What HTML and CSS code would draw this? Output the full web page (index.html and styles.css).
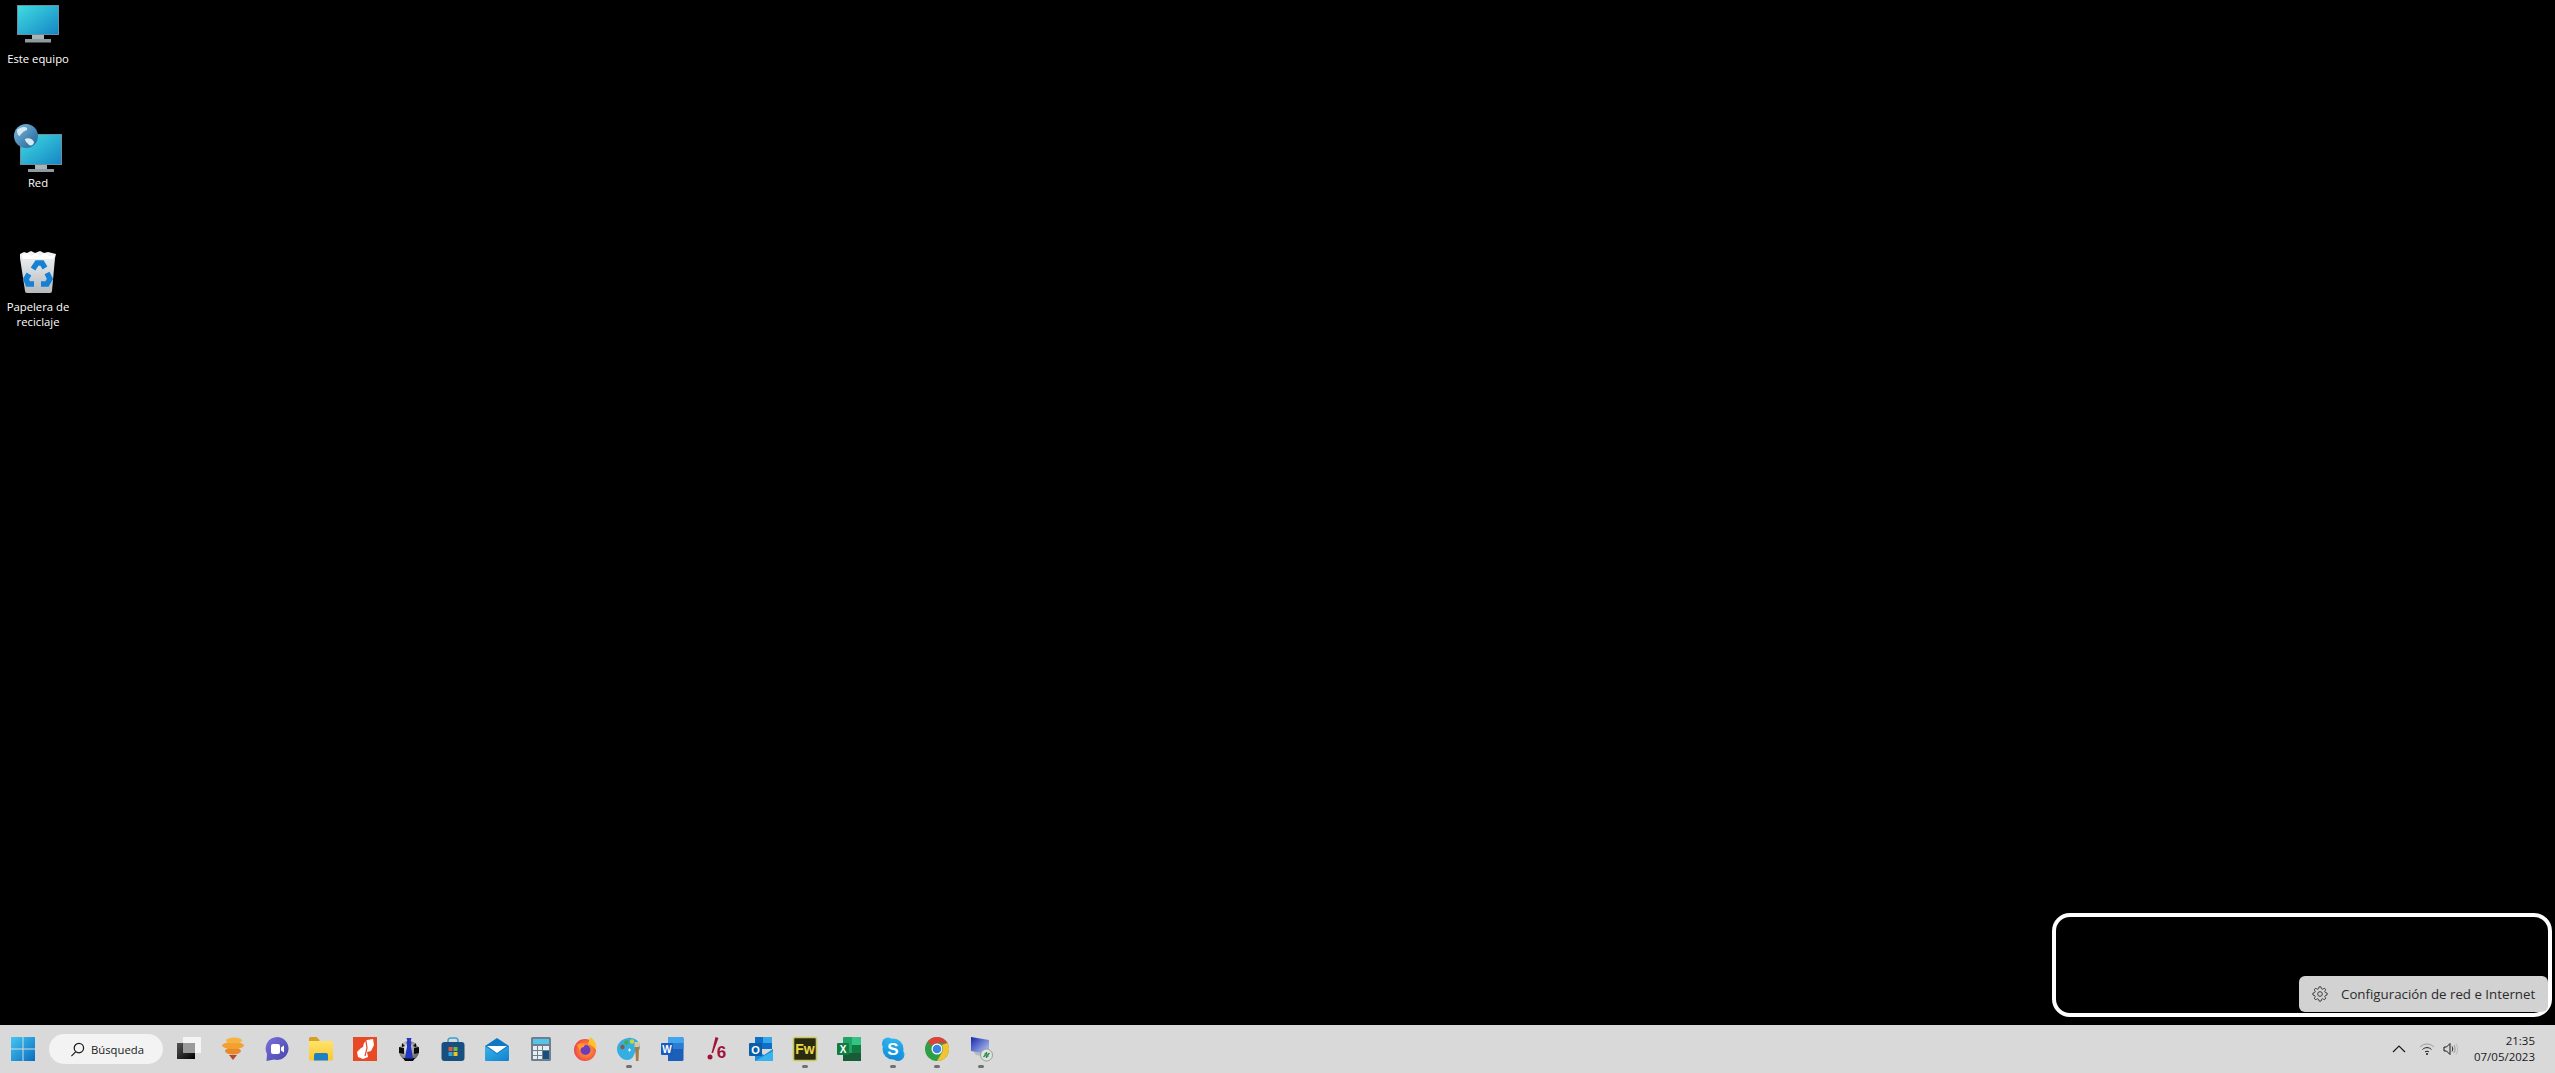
FILE: index.html
```html
<!DOCTYPE html>
<html lang="es">
<head>
    <meta charset="UTF-8">
    <meta name="viewport" content="width=device-width, initial-scale=1.0">
    <title>Escritorio</title>
    <link rel="stylesheet" href="styles.css">
</head>
<body>
    <svg class="defs" aria-hidden="true">
        <defs>
            <linearGradient id="screen" x1="0" y1="0" x2="1" y2="1">
                <stop offset="0" stop-color="#3fdde2"/>
                <stop offset="1" stop-color="#1685c4"/>
            </linearGradient>
            <linearGradient id="globe" x1="0" y1="0" x2="1" y2="1">
                <stop offset="0" stop-color="#7dbde0"/>
                <stop offset="1" stop-color="#1f5f96"/>
            </linearGradient>
            <linearGradient id="bin" x1="0" y1="0" x2="0" y2="1">
                <stop offset="0" stop-color="#f4f6f7"/>
                <stop offset="1" stop-color="#b6babd"/>
            </linearGradient>
            <linearGradient id="start" x1="0" y1="0" x2="1" y2="1">
                <stop offset="0" stop-color="#43c8f2"/>
                <stop offset="1" stop-color="#0a6cc2"/>
            </linearGradient>
            <linearGradient id="tv-dark" x1="0" y1="0" x2="1" y2="1">
                <stop offset="0" stop-color="#555"/>
                <stop offset="1" stop-color="#000"/>
            </linearGradient>
            <linearGradient id="teams" x1="0" y1="0" x2="1" y2="1">
                <stop offset="0" stop-color="#7a70d8"/>
                <stop offset="1" stop-color="#4646ad"/>
            </linearGradient>
            <linearGradient id="folder" x1="0" y1="0" x2="0" y2="1">
                <stop offset="0" stop-color="#ffe36b"/>
                <stop offset="1" stop-color="#fbc82d"/>
            </linearGradient>
            <linearGradient id="mail" x1="0" y1="0" x2="1" y2="1">
                <stop offset="0" stop-color="#39b4ea"/>
                <stop offset="1" stop-color="#1180cf"/>
            </linearGradient>
            <radialGradient id="fox" cx="0.55" cy="0.5" r="0.6">
                <stop offset="0" stop-color="#ffb02e"/>
                <stop offset="0.7" stop-color="#f9603c"/>
                <stop offset="1" stop-color="#e8305a"/>
            </radialGradient>
            <radialGradient id="ball" cx="0.4" cy="0.35" r="0.7">
                <stop offset="0" stop-color="#eee"/>
                <stop offset="1" stop-color="#555"/>
            </radialGradient>
            <linearGradient id="skype" x1="0" y1="0" x2="0" y2="1">
                <stop offset="0" stop-color="#2fb6ee"/>
                <stop offset="1" stop-color="#0f8ad6"/>
            </linearGradient>
            <linearGradient id="remote" x1="0" y1="0" x2="1" y2="1">
                <stop offset="0" stop-color="#1426b0"/>
                <stop offset="1" stop-color="#c4d3f2"/>
            </linearGradient>
        </defs>
    </svg>

    <main class="desktop">
        <div class="desk-icons">
            <div class="desk-icon">
                <svg class="desk-glyph" viewBox="0 0 48 48">
                    <path d="M18 33h12v4H18z" fill="#a9b4b8"/>
                    <path d="M11 37h26v3.500H11z" fill="#8f9a9e"/>
                    <rect x="3.500" y="3.500" width="41" height="29" fill="url(#screen)" stroke="#6f8fa0"/>
                </svg>
                <span class="desk-label">Este equipo</span>
            </div>
            <div class="desk-icon">
                <svg class="desk-glyph" viewBox="0 0 48 48">
                    <path d="M21 39h12v4H21z" fill="#a9b4b8"/>
                    <path d="M14 43h26v3H14z" fill="#8f9a9e"/>
                    <rect x="6.500" y="8.500" width="41" height="30" fill="url(#screen)" stroke="#6f8fa0"/>
                    <circle cx="12" cy="10" r="12" fill="url(#globe)"/>
                    <path d="M3 4c3-3 8-4 10-2 1 2-2 3-4 4-1 2-3 2-3 4-2 0-3-3-3-6zM11 13c3-2 8 0 9 3 0 3-3 4-5 3-1-2-4-3-4-6z" fill="#d8e9f3"/>
                </svg>
                <span class="desk-label">Red</span>
            </div>
            <div class="desk-icon">
                <svg class="desk-glyph" viewBox="0 0 48 48">
                    <path d="M6 4l4-2 3 1 4-2 4 2 5-2 4 2 4-1 4 1 4 1-1 4-3 33a2 2 0 0 1-2 2H13a2 2 0 0 1-2-2L6 8z" fill="url(#bin)"/>
                    <path d="M8 5l5-2 4 3 5-3 4 3 5-3 4 3 6-1-2 4H9z" fill="#fff"/>
                    <g fill="none" stroke="#1680d4" stroke-width="5.500">
                        <path d="M19 19l4-6 5 0 3 5"/>
                        <path d="M33 23l3 6-3 5-6 0"/>
                        <path d="M20 34l-6 0-2-5 3-5"/>
                    </g>
                </svg>
                <span class="desk-label">Papelera de reciclaje</span>
            </div>
        </div>

        <div class="frame">
            <div class="flyout">
                <svg class="gear" viewBox="0 0 24 24" fill="none" stroke="#333" stroke-width="1.400">
                    <circle cx="12" cy="12" r="3.500"/>
                    <path d="M19.400 15a1.650 1.650 0 0 0 .33 1.820l.06.06a2 2 0 0 1 0 2.830 2 2 0 0 1-2.830 0l-.06-.06a1.650 1.650 0 0 0-1.820-.33 1.650 1.650 0 0 0-1 1.510V21a2 2 0 0 1-2 2 2 2 0 0 1-2-2v-.09A1.650 1.650 0 0 0 9 19.400a1.650 1.650 0 0 0-1.820.33l-.06.06a2 2 0 0 1-2.830 0 2 2 0 0 1 0-2.830l.06-.06a1.650 1.650 0 0 0 .33-1.820 1.650 1.650 0 0 0-1.510-1H3a2 2 0 0 1-2-2 2 2 0 0 1 2-2h.09A1.650 1.650 0 0 0 4.600 9a1.650 1.650 0 0 0-.33-1.820l-.06-.06a2 2 0 0 1 0-2.830 2 2 0 0 1 2.830 0l.06.06a1.650 1.650 0 0 0 1.820.33H9a1.650 1.650 0 0 0 1-1.510V3a2 2 0 0 1 2-2 2 2 0 0 1 2 2v.09a1.650 1.650 0 0 0 1 1.510 1.650 1.650 0 0 0 1.820-.33l.06-.06a2 2 0 0 1 2.830 0 2 2 0 0 1 0 2.830l-.06.06a1.650 1.650 0 0 0-.33 1.820V9a1.650 1.650 0 0 0 1.510 1H21a2 2 0 0 1 2 2 2 2 0 0 1-2 2h-.09a1.650 1.650 0 0 0-1.510 1z"/>
                </svg>
                <span class="flyout-text">Configuración de red e Internet</span>
            </div>
        </div>
    </main>

    <footer class="taskbar">
        <div class="tb-item">
            <svg class="tb-glyph" viewBox="0 0 24 24">
                <path d="M0 0h11.500v11.500H0zM12.500 0H24v11.500H12.500zM0 12.500h11.500V24H0zM12.500 12.500H24V24H12.500z" fill="url(#start)"/>
            </svg>
        </div>
        <div class="search">
            <svg class="search-glyph" viewBox="0 0 16 16" fill="none" stroke="#1a1a1a" stroke-width="1.300">
                <circle cx="9.500" cy="6.500" r="5"/>
                <path d="M6 10.500l-4.500 4.500"/>
            </svg>
            <span class="search-text">Búsqueda</span>
        </div>
        <div class="tb-apps">
            <div class="tb-item">
                <svg class="tb-glyph" viewBox="0 0 24 24">
                    <rect x="6" y="0" width="18" height="16" fill="#f4f4f4"/>
                    <rect x="0" y="6" width="18" height="16" fill="url(#tv-dark)"/>
                    <rect x="6" y="6" width="12" height="10" fill="#9b9b9b"/>
                </svg>
            </div>
            <div class="tb-item">
                <svg class="tb-glyph" viewBox="0 0 24 24">
                    <path d="M8 18h8l-4 5z" fill="#b5482a"/>
                    <ellipse cx="12" cy="14" rx="8" ry="3.500" fill="#e8892a"/>
                    <ellipse cx="12" cy="8.500" rx="11" ry="3.500" fill="#f2a02f"/>
                    <ellipse cx="13" cy="3.500" rx="8" ry="3" fill="#f7b23f"/>
                </svg>
            </div>
            <div class="tb-item">
                <svg class="tb-glyph" viewBox="0 0 24 24">
                    <path d="M12 0a11.500 11.500 0 1 1-3 22.600L1.500 24 2 17A11.500 11.500 0 0 1 12 0z" fill="url(#teams)"/>
                    <rect x="6" y="7" width="9" height="10" rx="2" fill="#fff"/>
                    <path d="M16 10.500l3-2v7l-3-2z" fill="#fff"/>
                </svg>
            </div>
            <div class="tb-item">
                <svg class="tb-glyph" viewBox="0 0 24 24">
                    <path d="M0 1.500A1.500 1.500 0 0 1 1.500 0h6l3 3v3H0z" fill="#d4a21f"/>
                    <path d="M0 4h22.500A1.500 1.500 0 0 1 24 5.500V22a1.500 1.500 0 0 1-1.500 1.500h-21A1.500 1.500 0 0 1 0 22z" fill="url(#folder)"/>
                    <path d="M5 23.500V18a2 2 0 0 1 2-2h10a2 2 0 0 1 2 2v5.500z" fill="#1f7fc4"/>
                </svg>
            </div>
            <div class="tb-item">
                <svg class="tb-glyph" viewBox="0 0 24 24">
                    <rect width="24" height="24" fill="#e94a26"/>
                    <path d="M14 3l6-1 1 6-3 6-4 1 1 5-5 2-5-2-1-5 4-4 2-1 1-4z" fill="#fff"/>
                    <path d="M13 4l1 7-2 8" fill="none" stroke="#e94a26" stroke-width="1.200"/>
                </svg>
            </div>
            <div class="tb-item">
                <svg class="tb-glyph" viewBox="0 0 24 24">
                    <circle cx="12" cy="14" r="10" fill="url(#ball)"/>
                    <path d="M2 10l5 1 0 6-5-1zM22 10l-5 1 0 6 5-1zM6 21l12 0-2 3H8zM5 6l3 3-3 1zM19 6l-3 3 3 1z" fill="#0c0c0c"/>
                    <path d="M9.500 1h5l-.8 3 .8 1-.5 4 2 12.500H8l2-12.500-.5-4 .8-1z" fill="#2337c0"/>
                </svg>
            </div>
            <div class="tb-item">
                <svg class="tb-glyph" viewBox="0 0 24 24">
                    <path d="M7 7V3.500A2.500 2.500 0 0 1 9.500 1h5A2.500 2.500 0 0 1 17 3.500V7" fill="none" stroke="#3aa0da" stroke-width="1.600"/>
                    <rect x="0.500" y="5" width="23" height="19" rx="3" fill="#17507f"/>
                    <rect x="7.500" y="10" width="4" height="4" fill="#e8563a"/>
                    <rect x="12.500" y="10" width="4" height="4" fill="#6fba3a"/>
                    <rect x="7.500" y="15" width="4" height="4" fill="#2ba5e0"/>
                    <rect x="12.500" y="15" width="4" height="4" fill="#f4c020"/>
                </svg>
            </div>
            <div class="tb-item">
                <svg class="tb-glyph" viewBox="0 0 24 24">
                    <path d="M0 9l12-8 12 8v14H0z" fill="#0f78c4"/>
                    <path d="M2 9h20l-10 7z" fill="#fff"/>
                    <path d="M0 9l12 8 12-8v14a1 1 0 0 1-1 1H1a1 1 0 0 1-1-1z" fill="url(#mail)"/>
                </svg>
            </div>
            <div class="tb-item">
                <svg class="tb-glyph" viewBox="0 0 24 24">
                    <rect x="2" y="0" width="20" height="24" rx="1.500" fill="#6d7f8c"/>
                    <rect x="4" y="2" width="16" height="5" fill="#57c3ea"/>
                    <path d="M4 9h4v4H4zM9 9h4v4H9zM14 9h6v4h-6zM4 14h4v4H4zM9 14h4v4H9zM4 19h4v3H4zM9 19h4v3H9z" fill="#e8edf0"/>
                    <rect x="14" y="14" width="6" height="8" fill="#17507f"/>
                </svg>
            </div>
            <div class="tb-item">
                <svg class="tb-glyph" viewBox="0 0 24 24">
                    <circle cx="12" cy="13" r="11" fill="url(#fox)"/>
                    <path d="M17 0c5 3 7 8 6 13-2-3-5-5-8-6z" fill="#ffc12e"/>
                    <circle cx="12.500" cy="13" r="5" fill="#6b3bc0"/>
                    <path d="M4 8c3-2 6-2 8-1l-1 3c-2 0-4 2-4 4z" fill="#ff9a2e"/>
                </svg>
            </div>
            <div class="tb-item running">
                <svg class="tb-glyph" viewBox="0 0 24 24">
                    <path d="M11 1c6-1 12 3 12 9 0 4-3 4-5 5-1 3-2 8-8 8C5 23 0 18 0 12 0 6 5 2 11 1z" fill="#35aee0"/>
                    <circle cx="5.500" cy="10" r="2.200" fill="#8a5a44"/>
                    <circle cx="9.500" cy="5.500" r="2.200" fill="#4aa84a"/>
                    <circle cx="15" cy="4.500" r="2.200" fill="#c8d63a"/>
                    <path d="M11 13h3M12.500 11.500v3" stroke="#fff" stroke-width="1"/>
                    <path d="M18 9h4l-.5 15h-2.500z" fill="#a97a42"/>
                    <rect x="17.500" y="5" width="5" height="5" fill="#d9c7a0"/>
                </svg>
            </div>
            <div class="tb-item">
                <svg class="tb-glyph" viewBox="0 0 24 24">
                    <path d="M7 0h14a1.500 1.500 0 0 1 1.500 1.500v21A1.500 1.500 0 0 1 21 24H7z" fill="#1c5fb8"/>
                    <path d="M7 0h14a1.500 1.500 0 0 1 1.500 1.500V6H7z" fill="#41a5ee"/>
                    <path d="M7 6h15.500v6H7z" fill="#2b7cd3"/>
                    <rect x="0" y="6" width="12" height="12" rx="1" fill="#185abd"/>
                    <text class="tb-letter" x="6" y="15.500" font-size="10">W</text>
                </svg>
            </div>
            <div class="tb-item">
                <svg class="tb-glyph" viewBox="0 0 24 24">
                    <path d="M10.500 0l3 1L8 16H6.500z" fill="#a2123c"/>
                    <circle cx="5" cy="20" r="2.500" fill="#a2123c"/>
                    <text class="tb-six" x="16.500" y="20.500" font-size="17">6</text>
                </svg>
            </div>
            <div class="tb-item">
                <svg class="tb-glyph" viewBox="0 0 24 24">
                    <rect x="6" y="0" width="17" height="12" fill="#0f6fc6"/>
                    <rect x="14" y="0" width="9" height="6" fill="#34a8e8"/>
                    <path d="M6 12l9 6 9-6v12H6z" fill="#1c8ad8"/>
                    <path d="M6 24l18-0V14z" fill="#37b3ee"/>
                    <rect x="0" y="6" width="13" height="13" rx="1" fill="#0a5ea8"/>
                    <text class="tb-letter" x="6.500" y="16.500" font-size="11">O</text>
                </svg>
            </div>
            <div class="tb-item running">
                <svg class="tb-glyph" viewBox="0 0 24 24">
                    <rect x="0.500" y="0.500" width="23" height="23" rx="1.500" fill="#2a2a10" stroke="#c9c95a" stroke-width="1.600"/>
                    <text class="tb-fw" x="12" y="17" font-size="14">Fw</text>
                </svg>
            </div>
            <div class="tb-item">
                <svg class="tb-glyph" viewBox="0 0 24 24">
                    <rect x="6" y="0" width="18" height="24" rx="1" fill="#21a366"/>
                    <rect x="15" y="0" width="9" height="8" fill="#33c481"/>
                    <rect x="15" y="8" width="9" height="8" fill="#107c41"/>
                    <rect x="6" y="16" width="18" height="8" fill="#185c37"/>
                    <rect x="0" y="6" width="12" height="12" rx="1" fill="#107c41"/>
                    <text class="tb-letter" x="6" y="15.500" font-size="10">X</text>
                </svg>
            </div>
            <div class="tb-item running">
                <svg class="tb-glyph" viewBox="0 0 24 24">
                    <circle cx="7" cy="6.500" r="6" fill="url(#skype)"/>
                    <circle cx="17" cy="17.500" r="6.500" fill="url(#skype)"/>
                    <circle cx="12" cy="12" r="10.500" fill="url(#skype)"/>
                    <text class="tb-letter" x="12" y="18" font-size="17">S</text>
                </svg>
            </div>
            <div class="tb-item running">
                <svg class="tb-glyph" viewBox="0 0 24 24">
                    <circle cx="12" cy="12" r="12" fill="#2f9e44"/>
                    <path d="M12 0a12 12 0 0 1 10.400 6H12a6 6 0 0 0-5.200 3L2.800 4.300A12 12 0 0 1 12 0z" fill="#e0403a"/>
                    <path d="M22.400 6A12 12 0 0 1 12 24l5.200-9A6 6 0 0 0 16.500 8z" fill="#f4c430"/>
                    <circle cx="12" cy="12" r="5.500" fill="#fff"/>
                    <circle cx="12" cy="12" r="4.300" fill="#3a82e4"/>
                </svg>
            </div>
            <div class="tb-item running">
                <svg class="tb-glyph" viewBox="0 0 24 24">
                    <path d="M3 13l18 3-2 4-12-2z" fill="#b4bac2"/>
                    <path d="M2 0l18 3v14L2 14z" fill="url(#remote)"/>
                    <circle cx="17.500" cy="18" r="6" fill="#dfe3e2" stroke="#8a8f8e" stroke-width="0.800"/>
                    <path d="M14.500 20l2-2M15.500 17h2v-2M20.500 16l-2 2M19.500 19h-2v2" stroke="#1c8a3e" stroke-width="1.300" fill="none"/>
                </svg>
            </div>
        </div>

        <div class="tray">
            <svg class="tray-glyph chevron" viewBox="0 0 16 16" fill="none" stroke="#1a1a1a" stroke-width="1.200">
                <path d="M2 11l6-6 6 6"/>
            </svg>
            <svg class="tray-glyph" viewBox="0 0 16 16" fill="none" stroke="#1a1a1a" stroke-width="1">
                <path d="M1 6c4-4 10-4 14 0" stroke="#999"/>
                <path d="M3.500 8.500c2.500-2.500 6.500-2.500 9 0"/>
                <path d="M6 11c1-1 3-1 4 0"/>
                <circle cx="8" cy="13" r="1" fill="#1a1a1a" stroke="none"/>
            </svg>
            <svg class="tray-glyph" viewBox="0 0 16 16" fill="none" stroke="#1a1a1a" stroke-width="1">
                <path d="M1 6h2.500L7 2.500v11L3.500 10H1z"/>
                <path d="M9 5.500c1 1.500 1 3.500 0 5"/>
                <path d="M11 4c1.500 2.500 1.500 5.500 0 8" stroke="#999"/>
                <path d="M13 2.500c2 3.500 2 7.500 0 11" stroke="#bbb"/>
            </svg>
            <div class="clock">
                <span>21:35</span>
                <span>07/05/2023</span>
            </div>
        </div>
    </footer>
</body>
</html>
```

FILE: styles.css
```css
body {
    margin: 0;
    font-family: "Open Sans", "Noto Sans", sans-serif;
    background-color: #000;
    color: #1a1a1a;
    display: flex;
    flex-direction: column;
    height: 100vh;
    overflow: hidden;
}
.defs {
    position: absolute;
    width: 0;
    height: 0;
}
.desktop {
    flex: 1;
    position: relative;
    padding-top: 2px;
}
.desk-icons {
    display: flex;
    flex-direction: column;
    width: 76px;
}
.desk-icon {
    height: 124px;
    display: flex;
    flex-direction: column;
    align-items: center;
}
.desk-glyph {
    width: 48px;
    height: 48px;
    overflow: visible;
}
.desk-label {
    margin-top: 1px;
    color: #fff;
    font-size: 11.300px;
    line-height: 15px;
    text-align: center;
    width: 72px;
}
.frame {
    position: absolute;
    right: 3px;
    bottom: 8px;
    width: 500px;
    height: 104px;
    box-sizing: border-box;
    border: 4px solid #fff;
    border-radius: 18px;
    display: flex;
    justify-content: flex-end;
    align-items: flex-end;
    padding-bottom: 1px;
}
.flyout {
    width: 249px;
    height: 36px;
    box-sizing: border-box;
    padding-left: 13px;
    background-color: #d2d2d2;
    border-radius: 6px;
    display: flex;
    align-items: center;
    gap: 13px;
}
.gear {
    width: 16px;
    height: 16px;
}
.flyout-text {
    font-size: 13.300px;
    color: #2b2b2b;
    white-space: nowrap;
}
.taskbar {
    height: 48px;
    flex-shrink: 0;
    background-color: #d9d9d9;
    display: flex;
    align-items: center;
    padding-left: 1px;
}
.tb-apps {
    display: flex;
    margin-left: 4px;
}
.tb-item {
    width: 44px;
    height: 48px;
    position: relative;
    display: flex;
    justify-content: center;
    align-items: center;
}
.tb-item.running::after {
    content: '';
    position: absolute;
    left: 19px;
    bottom: 5px;
    width: 6px;
    height: 3px;
    border-radius: 2px;
    background-color: #707070;
}
.tb-glyph {
    width: 24px;
    height: 24px;
    overflow: visible;
}
.tb-letter {
    fill: #fff;
    font-family: "Liberation Sans", sans-serif;
    font-weight: bold;
    text-anchor: middle;
}
.tb-six {
    fill: #a2123c;
    font-family: "Liberation Sans", sans-serif;
    font-weight: bold;
    text-anchor: middle;
}
.tb-fw {
    fill: #e8d94a;
    font-family: "Liberation Sans", sans-serif;
    font-weight: bold;
    text-anchor: middle;
}
.search {
    width: 114px;
    height: 30px;
    margin-left: 4px;
    box-sizing: border-box;
    padding-left: 21px;
    background-color: #f3f3f3;
    border-radius: 15px;
    display: flex;
    align-items: center;
    gap: 6px;
}
.search-glyph {
    width: 15px;
    height: 15px;
}
.search-text {
    font-size: 11.300px;
}
.tray {
    margin-left: auto;
    padding-right: 20px;
    display: flex;
    align-items: center;
}
.tray-glyph {
    width: 16px;
    height: 16px;
    margin-right: 8px;
}
.chevron {
    margin-right: 12px;
}
.clock {
    margin-left: 7px;
    display: flex;
    flex-direction: column;
    align-items: flex-end;
    gap: 2px;
    font-size: 11.500px;
    line-height: 14px;
}
```
